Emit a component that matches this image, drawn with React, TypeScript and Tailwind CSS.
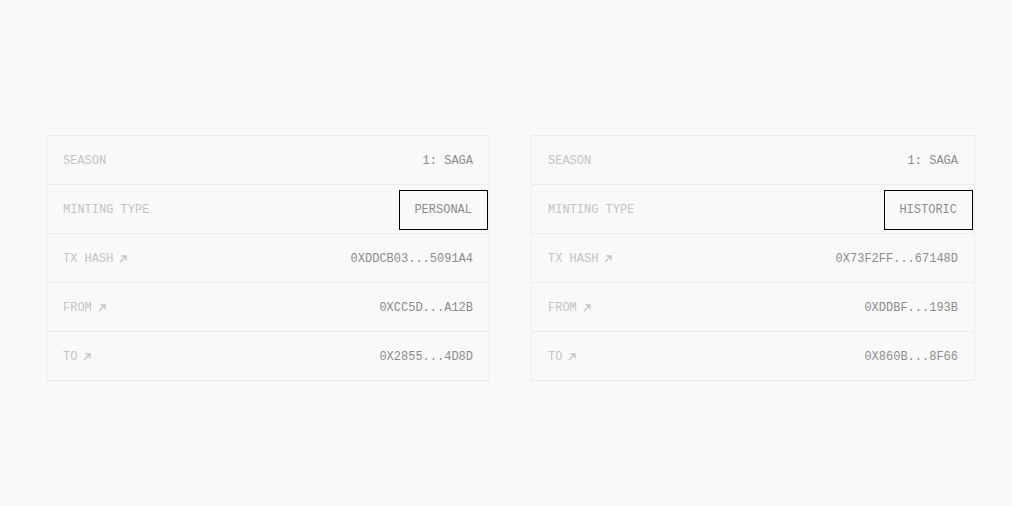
import React from 'react'

type Row = { label: string; value: string; link?: boolean; badge?: boolean }

const cards: Row[][] = [
  [
    { label: 'SEASON', value: '1: SAGA' },
    { label: 'MINTING TYPE', value: 'PERSONAL', badge: true },
    { label: 'TX HASH', value: '0XDDCB03...5091A4', link: true },
    { label: 'FROM', value: '0XCC5D...A12B', link: true },
    { label: 'TO', value: '0X2855...4D8D', link: true },
  ],
  [
    { label: 'SEASON', value: '1: SAGA' },
    { label: 'MINTING TYPE', value: 'HISTORIC', badge: true },
    { label: 'TX HASH', value: '0X73F2FF...67148D', link: true },
    { label: 'FROM', value: '0XDDBF...193B', link: true },
    { label: 'TO', value: '0X860B...8F66', link: true },
  ],
]

const Arrow = () => (
  <svg width="8" height="8" viewBox="0 0 8 8" fill="none" className="ml-[6px]">
    <path d="M1 7L7 1M2.5 1H7V5.5" stroke="#c2c2c2" strokeWidth="1.3" />
  </svg>
)

const Card = ({ rows }: { rows: Row[] }) => (
  <div className="w-[444px] border border-[#ececec] bg-[#f9f9f9]">
    {rows.map((r) => (
      <div
        key={r.label}
        className="flex h-[49px] items-center justify-between border-t border-[#ececec] px-4 pt-[2px] first:h-12 first:border-t-0"
      >
        <span className="flex items-center text-[#c4c4c4]">
          {r.label}
          {r.link && <Arrow />}
        </span>
        {r.badge ? (
          <span className="-mr-[15px] flex h-10 items-center border border-black pl-[14px] pr-[15px] text-[#8c8c8c]">{r.value}</span>
        ) : (
          <span className="text-[#8c8c8c]">{r.value}</span>
        )}
      </div>
    ))}
  </div>
)

export default function App() {
  return (
    <div className="flex h-[506px] w-[1012px] items-start gap-[41px] bg-[#f9f9f9] pl-[46px] pt-[135px] font-['Liberation_Mono',monospace] text-[12px] leading-none">
      {cards.map((c, i) => (
        <Card key={i} rows={c} />
      ))}
    </div>
  )
}
